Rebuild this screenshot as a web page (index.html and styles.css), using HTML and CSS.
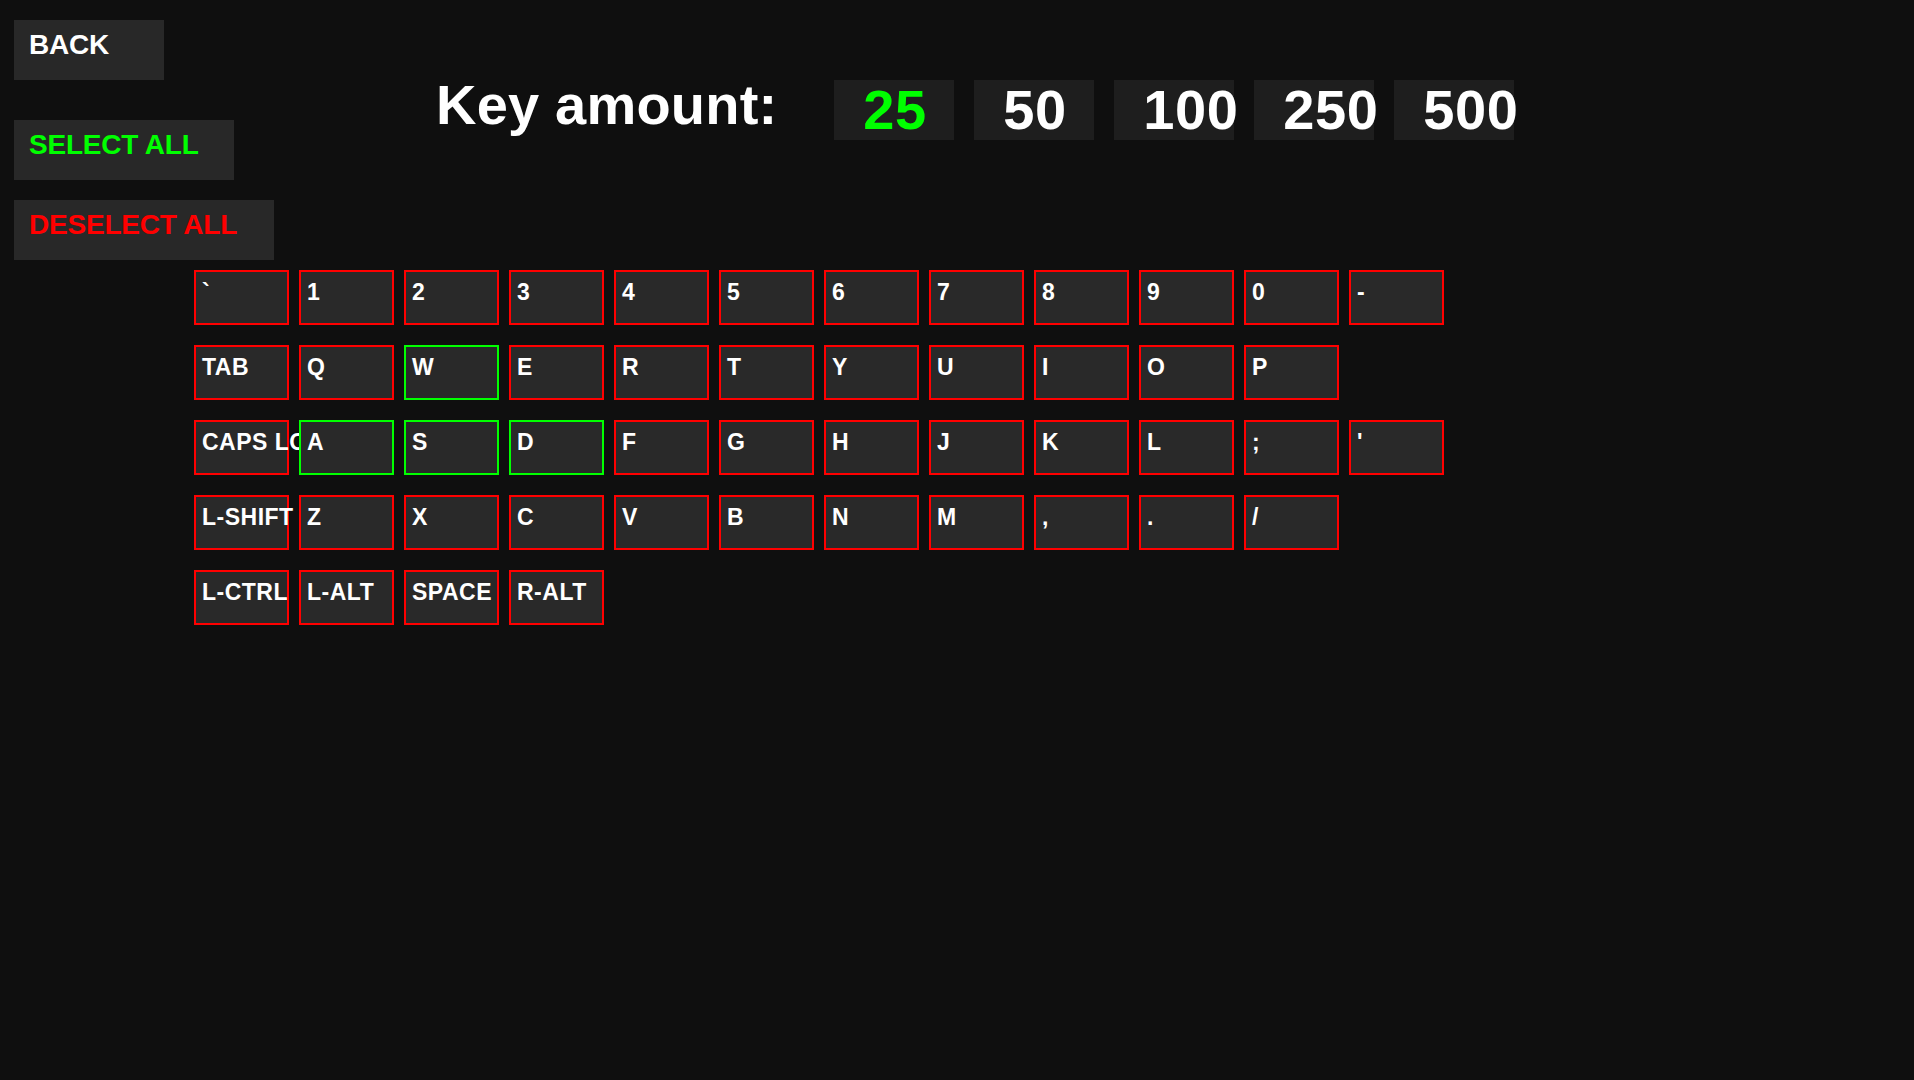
FILE: index.html
```html
<!DOCTYPE html>
<html lang="en">
<head>
<meta charset="utf-8">
<title>Key selection</title>
<link rel="stylesheet" href="styles.css">
</head>
<body>
<div class="screen">
  <div class="top">
    <div class="menu">
      <div class="btn btn-back">BACK</div>
      <div class="btn btn-select">SELECT ALL</div>
      <div class="btn btn-deselect">DESELECT ALL</div>
    </div>
    <div class="amount">
      <div class="amount-label">Key amount:</div>
      <div class="amount-opt active">25</div>
      <div class="amount-opt">50</div>
      <div class="amount-opt">100</div>
      <div class="amount-opt">250</div>
      <div class="amount-opt">500</div>
    </div>
  </div>
  <div class="keyboard">
    <div class="kb-row">
      <div class="key">`</div><div class="key">1</div><div class="key">2</div><div class="key">3</div><div class="key">4</div><div class="key">5</div><div class="key">6</div><div class="key">7</div><div class="key">8</div><div class="key">9</div><div class="key">0</div><div class="key">-</div>
    </div>
    <div class="kb-row">
      <div class="key">TAB</div><div class="key">Q</div><div class="key on">W</div><div class="key">E</div><div class="key">R</div><div class="key">T</div><div class="key">Y</div><div class="key">U</div><div class="key">I</div><div class="key">O</div><div class="key">P</div>
    </div>
    <div class="kb-row">
      <div class="key">CAPS LOCK</div><div class="key on">A</div><div class="key on">S</div><div class="key on">D</div><div class="key">F</div><div class="key">G</div><div class="key">H</div><div class="key">J</div><div class="key">K</div><div class="key">L</div><div class="key">;</div><div class="key">'</div>
    </div>
    <div class="kb-row">
      <div class="key">L-SHIFT</div><div class="key">Z</div><div class="key">X</div><div class="key">C</div><div class="key">V</div><div class="key">B</div><div class="key">N</div><div class="key">M</div><div class="key">,</div><div class="key">.</div><div class="key">/</div>
    </div>
    <div class="kb-row">
      <div class="key">L-CTRL</div><div class="key">L-ALT</div><div class="key">SPACE</div><div class="key">R-ALT</div>
    </div>
  </div>
</div>
</body>
</html>
```
FILE: styles.css
```css
html, body {
  margin: 0;
  padding: 0;
  background: #0f0f0f;
}

body {
  width: 1914px;
  height: 1080px;
  overflow: hidden;
  font-family: "Liberation Sans", Arial, sans-serif;
  font-weight: bold;
  color: #ffffff;
}

.screen {
  padding: 20px 0 0 14px;
}

.top {
  display: flex;
  align-items: flex-start;
}

.menu {
  display: flex;
  flex-direction: column;
  align-items: flex-start;
  width: 260px;
}

.btn {
  box-sizing: border-box;
  height: 60px;
  padding: 8px 0 0 15px;
  background: #282828;
  font-size: 28px;
  line-height: 33px;
  letter-spacing: -0.2px;
  white-space: nowrap;
}

.btn-back {
  width: 150px;
  color: #ffffff;
}

.btn-select {
  width: 220px;
  margin-top: 40px;
  color: #00ff00;
}

.btn-deselect {
  width: 260px;
  margin-top: 20px;
  color: #ff0000;
}

.amount {
  display: flex;
  align-items: flex-start;
  gap: 20px;
  margin: 55px 0 0 162px;
}

.amount-label {
  font-size: 56px;
  line-height: 60px;
  letter-spacing: 0.2px;
  margin-right: 37px;
  white-space: nowrap;
}

.amount-opt {
  box-sizing: border-box;
  width: 120px;
  height: 60px;
  margin-top: 5px;
  padding-left: 29px;
  background: #1e1e1e;
  font-size: 56px;
  line-height: 60px;
  letter-spacing: 0.5px;
  white-space: nowrap;
}

.amount-opt.active {
  color: #00ff00;
}

.keyboard {
  display: flex;
  flex-direction: column;
  gap: 20px;
  margin: 10px 0 0 180px;
}

.kb-row {
  display: flex;
  gap: 10px;
}

.key {
  box-sizing: border-box;
  width: 95px;
  height: 55px;
  flex: none;
  border: 2px solid #ff0000;
  background: #292929;
  padding: 7px 0 0 6px;
  font-size: 23px;
  line-height: 26px;
  letter-spacing: 0.5px;
  white-space: nowrap;
}

.key.on {
  border-color: #00ff00;
}
```
